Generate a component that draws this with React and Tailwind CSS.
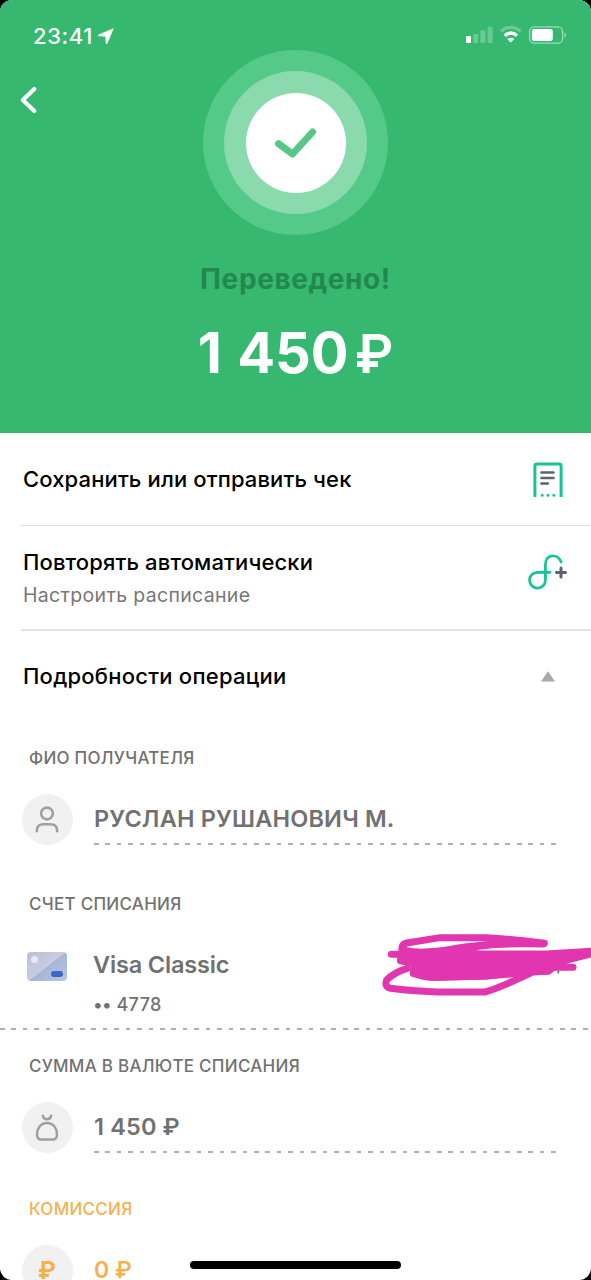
import React from "react";

const dashes =
  "bg-[repeating-linear-gradient(90deg,#b0b0b0_0px,#b0b0b0_4.6px,transparent_4.6px,transparent_11.43px)]";

function StatusBar() {
  return (
    <div className="flex h-[50px] items-start justify-between pl-[33px] pr-[25px] pt-[22px]">
      <div className="flex items-center gap-[5px]">
        <span className="text-[22px] font-medium leading-[28px] tracking-[0.6px]">23:41</span>
        <svg width="16" height="16" viewBox="0 0 15 15" fill="#fff">
          <path d="M14.400.600 8.700 14.300c-.400.800-1.300.600-1.300-.300L7.200 7.800 1 7.600c-.900 0-1-.900-.300-1.300Z" stroke="#fff" strokeWidth=".5" />
        </svg>
      </div>
      <div className="flex h-[26px] items-center">
        <svg width="100" height="18" viewBox="0 0 100 18" fill="#fff">
          <rect x="0" y="10" width="5" height="7" rx="1" />
          <g opacity=".25">
            <rect x="7.200" y="8" width="5" height="9" rx="1" />
            <rect x="14.400" y="4.300" width="5" height="12.700" rx="1" />
            <rect x="21.600" y=".8" width="5" height="16.200" rx="1" />
          </g>
          <g fill="none" stroke="#fff">
            <path d="M34.800 5.200Q44.800-2.400 54.800 5.200" strokeWidth="3.200" opacity=".28" />
            <path d="M38.600 9.600Q44.800 4.600 51 9.600" strokeWidth="3.400" />
          </g>
          <path d="M41.200 13Q44.800 10.300 48.400 13L44.800 16.600Z" />
          <rect x="63.600" y=".8" width="33" height="16.400" rx="4.500" fill="none" stroke="#fff" strokeOpacity=".5" strokeWidth="1.300" />
          <rect x="65.800" y="2.900" width="21" height="12.200" rx="2.300" />
          <path d="M98.400 6.500c2 .8 2 4.300 0 5.100Z" opacity=".5" />
        </svg>
      </div>
    </div>
  );
}

function Header() {
  return (
    <header className="flex h-[433px] shrink-0 flex-col bg-[#36b871] text-white">
      <StatusBar />
      <div className="grid grid-cols-[1fr_185px_1fr] items-start">
        <svg className="ml-[19px] mt-[36px]" width="20" height="28" viewBox="0 0 20 28" fill="none" stroke="#fff" strokeWidth="4.200" strokeLinecap="round" strokeLinejoin="round">
          <path d="M15.300 3 3.800 14l11.500 11" />
        </svg>
        <div className="flex size-[185px] items-center justify-center rounded-full bg-[#55ca88]">
          <div className="flex size-[143px] items-center justify-center rounded-full bg-[#8bdaad]">
            <div className="flex size-[100px] items-center justify-center rounded-full bg-white">
              <svg width="44" height="32" viewBox="0 0 44 32" fill="none" stroke="#57c788" strokeWidth="7" strokeLinecap="round" strokeLinejoin="round">
                <path d="M4.500 16.600 18.500 27 38.600 5" />
              </svg>
            </div>
          </div>
        </div>
      </div>
      <h1 className="mt-[24px] text-center text-[28px] font-bold leading-[40px] tracking-[0.6px] text-[#23884f]">Переведено!</h1>
      <div className="mt-[20px] flex justify-center gap-[6px] text-[56px] font-bold leading-[68px]">
        <span className="[word-spacing:2px]">1 450</span>
        <span className="text-[53px] font-semibold leading-[70px]">₽</span>
      </div>
    </header>
  );
}

function ReceiptIcon() {
  return (
    <svg width="30" height="36" viewBox="0 0 30 36" fill="none" stroke="#17c493" strokeWidth="3">
      <path d="M1.900 35V4Q1.900 1.900 4 1.900H26Q28.100 1.900 28.100 4V35" />
      <path d="M8.500 10.500H20.500M8.500 16H20.500M8.500 21.500H14.800" stroke="#5b6270" strokeWidth="2.700" strokeLinecap="round" />
      <path d="M9.200 33.200h.01M15 33.200h.01M20.800 33.200h.01" strokeLinecap="round" />
    </svg>
  );
}

function RepeatIcon() {
  return (
    <svg width="40" height="36" viewBox="0 0 40 36" fill="none" stroke="#17c493" strokeWidth="2.800" strokeLinecap="round">
      <path d="M22 18.300H9.500A7.900 7.900 0 1 0 17.400 26.200V10.500C17.400-.400 30-.800 33.200 8" />
      <path d="M28.500 18.500h9M33 14v9" stroke="#5b6270" strokeWidth="3" />
    </svg>
  );
}

function PersonIcon() {
  return (
    <svg width="24" height="28" viewBox="0 0 24 28" fill="none" stroke="#a0a0a0" strokeWidth="2.600" strokeLinecap="round">
      <circle cx="12" cy="7.500" r="5.900" />
      <path d="M1.900 25.200V24Q2.300 18.300 8.500 18.300h7q6.200 0 6.600 5.700v1.200" />
    </svg>
  );
}

function BagIcon() {
  return (
    <svg width="24" height="28" viewBox="0 0 24 28" fill="none" stroke="#a0a0a0" strokeWidth="2.500" strokeLinecap="round">
      <path d="M7.800 1.800Q8.500 5.300 12 5.300T16.200 1.800" />
      <path d="M12 9C5.500 9 2 14.700 2 20.500Q2 25.600 6.500 25.600h11Q22 25.600 22 20.500C22 14.700 18.500 9 12 9Z" />
    </svg>
  );
}

function CardIcon() {
  return (
    <div className="flex h-[29px] w-[40px] flex-col justify-between overflow-hidden rounded-[4px] bg-[linear-gradient(142deg,#bdbfd3_0%,#c8cce0_50%,#a7b6d4_51%,#b4c8e4_100%)] px-[4px] py-[4px]">
      <span className="size-[7px] rounded-full bg-[#e6e8f2]" />
      <span className="h-[6px] w-[12px] self-end rounded-[3px] bg-[#3c66c8]" />
    </div>
  );
}

function Scribble() {
  return (
    <svg className="absolute left-[370px] top-[920px]" width="221" height="90" viewBox="0 0 663 270" fill="none" stroke="#e236b0" strokeWidth="21" strokeLinecap="round" strokeLinejoin="round">
      <path d="M523 70Q430 58 350 53H210L110 69Q94 73 96 90Q150 104 240 88Q340 68 520 72" />
      <path d="M64 103H100L92 122L135 132L130 160Q170 174 200 172L350 168L470 154H535" />
      <path d="M112 145Q70 158 50 180Q42 200 62 205Q120 213 200 216H345Q380 207 480 160" />
      <path d="M500 142H609" />
      <path d="M340 72Q440 66 520 70L440 72Q360 76 300 86Z" fill="#e236b0" strokeWidth="14" />
      <path d="M92 102 230 92 330 102H530L663 94V102L590 120 535 152 350 168 200 172 130 160 135 132 92 122Z" fill="#e236b0" />
      <path d="M565 154v4" stroke="#666" strokeWidth="5" />
    </svg>
  );
}

function Label({ children, className = "text-[#717171]" }) {
  return <div className={`pl-[29px] text-[17px] font-medium leading-[24px] tracking-[0.27px] ${className}`}>{children}</div>;
}

function Disc({ children }) {
  return <div className="flex size-[51px] shrink-0 items-center justify-center rounded-full bg-[#f1f1f1]">{children}</div>;
}

export default function App() {
  return (
    <div className="h-[1280px] w-[591px] overflow-hidden bg-black">
      <main
        className="relative flex h-[1280px] flex-col overflow-hidden rounded-[12px] bg-white text-black"
        style={{ fontFamily: '"Inter", "Liberation Sans", sans-serif' }}
      >
        <Header />

        <section className="flex shrink-0 flex-col pl-[21px]">
          <div className="flex h-[93px] items-center justify-between border-b-[1.5px] border-[#dedede] pl-[2px] pr-[28px]">
            <span className="text-[22px] font-medium leading-[30px] tracking-[0.13px]">Сохранить или отправить чек</span>
            <div className="pt-[2px]"><ReceiptIcon /></div>
          </div>
          <div className="flex h-[105px] items-start justify-between border-b-2 border-[#e4e4e4] pl-[2px] pr-[23px]">
            <div className="flex flex-col pt-[21px]">
              <span className="text-[22px] font-medium leading-[30px] tracking-[0.13px]">Повторять автоматически</span>
              <span className="mt-[4px] text-[19.5px] leading-[28px] tracking-[0.33px] text-[#777]">Настроить расписание</span>
            </div>
            <div className="pt-[28px]"><RepeatIcon /></div>
          </div>
          <div className="flex h-[91px] items-center justify-between pl-[2px] pr-[36px]">
            <span className="-mt-[2px] text-[22px] font-medium leading-[30px] tracking-[0.24px]">Подробности операции</span>
            <svg width="14" height="11" viewBox="0 0 14 11" fill="#a8a8a8"><path d="M7 .3 14 10.500H0Z" /></svg>
          </div>
        </section>

        <section className="flex h-[558px] shrink-0 flex-col text-[#717171]">
          <div className="h-[146px] pt-[24px]">
            <Label>ФИО ПОЛУЧАТЕЛЯ</Label>
            <div className="mt-[24px] flex gap-[21px] pl-[21.5px]">
              <Disc><PersonIcon /></Disc>
              <div className="flex w-[462.5px] flex-col pl-[0.5px]">
                <span className="mt-[10px] text-[23.5px] font-semibold leading-[30px] tracking-[0.18px]">РУСЛАН РУШАНОВИЧ М.</span>
                <div className={`mt-[9px] h-[1.500px] ${dashes}`} />
              </div>
            </div>
          </div>
          <div className="h-[162px] pt-[24px]">
            <Label>СЧЕТ СПИСАНИЯ</Label>
            <div className="mt-[34px] flex gap-[26px] pl-[27px]">
              <div className="pt-[2px]"><CardIcon /></div>
              <div className="flex flex-col">
                <span className="text-[23.5px] font-semibold leading-[30px] tracking-[-0.15px]">Visa Classic</span>
                <span className="mt-[13px] text-[18px] font-medium leading-[24px] tracking-[0.4px]"><span className="tracking-[-0.5px]">••</span> 4778</span>
              </div>
            </div>
            <div className={`mt-[11px] h-[1.500px] ${dashes}`} />
          </div>
          <div className="h-[143px] pt-[24px]">
            <Label>СУММА В ВАЛЮТЕ СПИСАНИЯ</Label>
            <div className="mt-[24px] flex gap-[21px] pl-[21.5px]">
              <Disc><BagIcon /></Disc>
              <div className="flex w-[462.5px] flex-col pl-[0.5px]">
                <span className="mt-[10px] text-[23.5px] font-semibold leading-[30px] tracking-[0.15px]">1 450 ₽</span>
                <div className={`mt-[9px] h-[1.500px] ${dashes}`} />
              </div>
            </div>
          </div>
          <div className="h-[107px] pt-[24px]">
            <Label className="text-[#f4b14e]">КОМИССИЯ</Label>
            <div className="mt-[24px] flex gap-[21px] pl-[21.5px] text-[#f4b14e]">
              <Disc><span className="text-[24px] font-bold leading-[30px]">₽</span></Disc>
              <span className="mt-[10px] pl-[0.5px] text-[23px] font-semibold leading-[30px]">0 ₽</span>
            </div>
          </div>
        </section>

        <Scribble />
        <div className="absolute left-[190px] top-[1261px] h-[8px] w-[211px] rounded-full bg-black" />
      </main>
    </div>
  );
}
